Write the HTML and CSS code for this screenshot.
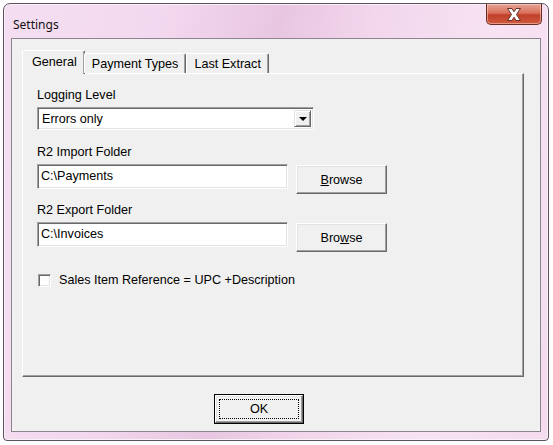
FILE: index.html
```html
<!DOCTYPE html>
<html lang="en">
<head>
  <meta charset="UTF-8">
  <title>Settings</title>
  <link rel="stylesheet" href="styles.css">
</head>
<body>
  <div class="window">
    <div class="titlebar">
      <span class="title">Settings</span>
      <span class="close">
        <svg width="16" height="13" viewBox="0 0 16 13">
          <path d="M1.5 0.5 L6 0.5 L8 3.8 L10 0.5 L14.5 0.5 L10.5 6.5 L14.5 12.5 L10 12.5 L8 9.2 L6 12.5 L1.5 12.5 L5.5 6.5 Z" fill="#fff" stroke="#6a3028" stroke-width="1"/>
        </svg>
      </span>
    </div>
    <div class="client">
      <div class="tabs">
        <div class="tab active">General</div>
        <div class="tab">Payment Types</div>
        <div class="tab">Last Extract</div>
      </div>
      <div class="panel">
        <div class="group">
          <div class="label">Logging Level</div>
          <div class="combo">
            <span class="combo-text">Errors only</span>
            <span class="arrow"><span class="tri"></span></span>
          </div>
        </div>

        <div class="group folder">
          <div class="label">R2 Import Folder</div>
          <div class="row">
            <div class="textbox">C:\Payments</div>
            <button class="btn browse"><u>B</u>rowse</button>
          </div>
        </div>

        <div class="group folder">
          <div class="label">R2 Export Folder</div>
          <div class="row">
            <div class="textbox">C:\Invoices</div>
            <button class="btn browse">Bro<u>w</u>se</button>
          </div>
        </div>

        <div class="check-row">
          <span class="checkbox"></span>
          <span>Sales Item Reference = UPC +Description</span>
        </div>
      </div>
      <div class="footer">
        <button class="btn ok"><span class="focus">OK</span></button>
      </div>
    </div>
  </div>
</body>
</html>
```

FILE: styles.css
```css
body {
  margin: 0;
  padding: 3px 4px 4px 3px;
  background: #fff;
  font-family: "Liberation Sans", Arial, sans-serif;
  font-size: 12.6px;
  color: #000;
}
.window {
  width: 546px;
  height: 438px;
  box-sizing: border-box;
  border: 1px solid #5a5460;
  border-radius: 7px 7px 4px 4px;
  background: linear-gradient(100deg, #f5def2 0%, #f3d9ef 25%, #e8c6e1 45%, #f2d6ec 60%, #f7e3f3 80%, #f4dbef 100%);
  display: flex;
  flex-direction: column;
  box-shadow: inset 0 0 0 1px #fbeff8;
}
.titlebar {
  height: 34px;
  display: flex;
  align-items: flex-start;
  padding-left: 9px;
  padding-right: 6px;
}
.title {
  font-family: "Noto Sans", "Open Sans", sans-serif;
  font-size: 12px;
  margin-top: 12px;
  color: #111;
}
.close {
  margin-left: auto;
  width: 56px;
  height: 21px;
  box-sizing: border-box;
  border: 1px solid #6b2a22;
  border-top: none;
  border-radius: 0 0 5px 5px;
  background: linear-gradient(#e8a595 0%, #d9705c 45%, #c0402a 55%, #d05a3e 100%);
  display: flex;
  align-items: center;
  justify-content: center;
  box-shadow: inset 0 0 0 1px rgba(255, 220, 210, 0.5);
}
.client {
  flex: 1;
  margin: 0 7px 8px 7px;
  background: #f0f0f0;
  border: 1px solid #8e8490;
  display: flex;
  flex-direction: column;
  padding: 11px 16px 0 10px;
}
.tabs {
  display: flex;
  align-items: flex-end;
  height: 23px;
  position: relative;
  z-index: 1;
}
.tab {
  height: 20px;
  box-sizing: border-box;
  padding: 3px 7px 0 7px;
  border: 1px solid #fff;
  border-bottom: none;
  border-right-color: #696969;
  box-shadow: inset -1px 0 #a0a0a0;
  border-radius: 2px 2px 0 0;
  background: #f0f0f0;
}
.tab.active {
  height: 24px;
  margin-bottom: -1px;
  padding: 4px 7px 0 9px;
  margin-right: -1px;
}
.panel {
  height: 304px;
  box-sizing: border-box;
  border: 1px solid;
  border-color: #fff #696969 #696969 #fff;
  box-shadow: inset -1px -1px #a0a0a0;
  padding: 14px 15px 0 14px;
}
.group {
  margin-bottom: 15px;
}
.group.folder {
  margin-bottom: 9px;
}
.label {
  line-height: 15px;
  margin-bottom: 4px;
}
.combo {
  width: 277px;
  height: 23px;
  box-sizing: border-box;
  border: 1px solid;
  border-color: #a0a0a0 #fff #fff #a0a0a0;
  box-shadow: inset 1px 1px #696969, inset -1px -1px #e3e3e3;
  background: #fff;
  display: flex;
  align-items: center;
  padding: 2px;
}
.combo-text {
  flex: 1;
  padding-left: 2px;
}
.arrow {
  width: 17px;
  height: 17px;
  box-sizing: border-box;
  background: #f0f0f0;
  border: 1px solid;
  border-color: #e3e3e3 #696969 #696969 #e3e3e3;
  box-shadow: inset 1px 1px #fff, inset -1px -1px #a0a0a0;
  display: flex;
  align-items: center;
  justify-content: center;
}
.tri {
  width: 0;
  height: 0;
  border-left: 4px solid transparent;
  border-right: 4px solid transparent;
  border-top: 4px solid #000;
}
.row {
  display: flex;
  align-items: flex-start;
  gap: 8px;
}
.textbox {
  width: 251px;
  height: 25px;
  box-sizing: border-box;
  border: 1px solid;
  border-color: #a0a0a0 #fff #fff #a0a0a0;
  box-shadow: inset 1px 1px #696969, inset -1px -1px #e3e3e3;
  background: #fff;
  padding: 4px 3px;
  line-height: 15px;
}
.btn {
  font-family: "Liberation Sans", Arial, sans-serif;
  font-size: 12.6px;
  color: #000;
  background: #f0f0f0;
  border: 1px solid;
  border-color: #fff #696969 #696969 #fff;
  box-shadow: inset -1px -1px #a0a0a0, inset 1px 1px #e3e3e3;
  padding: 0;
  margin: 0;
}
.browse {
  width: 91px;
  height: 29px;
  margin-top: 1px;
}
.check-row {
  display: flex;
  align-items: center;
  gap: 8px;
  margin-top: 21px;
  padding-left: 1px;
}
.checkbox {
  width: 13px;
  height: 13px;
  box-sizing: border-box;
  background: #fff;
  border: 1px solid;
  border-color: #a0a0a0 #fff #fff #a0a0a0;
  box-shadow: inset 1px 1px #696969, inset -1px -1px #e3e3e3;
}
.footer {
  flex: 1;
  display: flex;
  align-items: flex-start;
  padding-top: 18px;
}
.ok {
  width: 88px;
  height: 28px;
  margin-left: 193px;
  outline: 1px solid #000;
  display: flex;
  padding: 3px;
}
.focus {
  flex: 1;
  border: 1px dotted #000;
  display: flex;
  align-items: center;
  justify-content: center;
}
```
